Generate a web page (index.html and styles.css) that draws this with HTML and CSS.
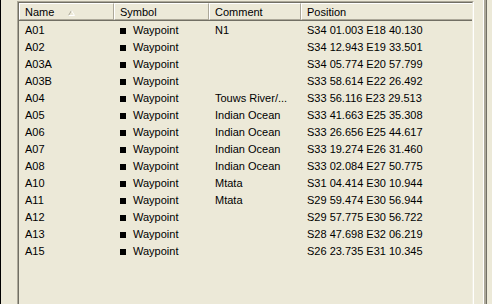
FILE: index.html
```html
<!DOCTYPE html>
<html>
	<head>
		<meta charset="utf-8" />
		<title>Waypoints</title>
		<link rel="stylesheet" href="styles.css">
	</head>
	<body>
		<div class="frame">
			<div class="list">
				<div class="list-inner">
					<div class="head">
						<div class="col">Name <svg class="sort" width="7" height="6" viewBox="0 0 7 6"><polyline points="0.5,5.5 3.5,0.5" fill="none" stroke="#aca899" stroke-width="1"/><polyline points="3.5,0.5 6.5,5.5 0.5,5.5" fill="none" stroke="#ffffff" stroke-width="1"/></svg></div>
						<div class="col">Symbol</div>
						<div class="col">Comment</div>
						<div class="col last">Position</div>
					</div>
					<div class="rows">
						<div class="row"><span>A01</span><span class="sym">Waypoint</span><span>N1</span><span>S34 01.003 E18 40.130</span></div>
						<div class="row"><span>A02</span><span class="sym">Waypoint</span><span></span><span>S34 12.943 E19 33.501</span></div>
						<div class="row"><span>A03A</span><span class="sym">Waypoint</span><span></span><span>S34 05.774 E20 57.799</span></div>
						<div class="row"><span>A03B</span><span class="sym">Waypoint</span><span></span><span>S33 58.614 E22 26.492</span></div>
						<div class="row"><span>A04</span><span class="sym">Waypoint</span><span>Touws River/...</span><span>S33 56.116 E23 29.513</span></div>
						<div class="row"><span>A05</span><span class="sym">Waypoint</span><span>Indian Ocean</span><span>S33 41.663 E25 35.308</span></div>
						<div class="row"><span>A06</span><span class="sym">Waypoint</span><span>Indian Ocean</span><span>S33 26.656 E25 44.617</span></div>
						<div class="row"><span>A07</span><span class="sym">Waypoint</span><span>Indian Ocean</span><span>S33 19.274 E26 31.460</span></div>
						<div class="row"><span>A08</span><span class="sym">Waypoint</span><span>Indian Ocean</span><span>S33 02.084 E27 50.775</span></div>
						<div class="row"><span>A10</span><span class="sym">Waypoint</span><span>Mtata</span><span>S31 04.414 E30 10.944</span></div>
						<div class="row"><span>A11</span><span class="sym">Waypoint</span><span>Mtata</span><span>S29 59.474 E30 56.944</span></div>
						<div class="row"><span>A12</span><span class="sym">Waypoint</span><span></span><span>S29 57.775 E30 56.722</span></div>
						<div class="row"><span>A13</span><span class="sym">Waypoint</span><span></span><span>S28 47.698 E32 06.219</span></div>
						<div class="row"><span>A15</span><span class="sym">Waypoint</span><span></span><span>S26 23.735 E31 10.345</span></div>
					</div>
				</div>
			</div>
			<div class="side"></div>
		</div>
	</body>
</html>
```

FILE: styles.css
```css
html,body{
	margin: 0;
	padding: 0;
}

body{
	background: #ece9d8;
	font-family: "Liberation Sans", Arial, sans-serif;
	font-size: 11px;
	color: #000000;
	width: 492px;
	height: 304px;
	overflow: hidden;
}

.frame{
	display: flex;
	height: 304px;
	border-left: 1px solid #000000;
	padding-left: 16px;
	box-sizing: border-box;
}

/* sunken border of the list view, two lines on each side */
.list{
	width: 457px;
	margin-top: 1px;
	height: 303px;
	border-top: 1px solid #aca899;
	border-left: 1px solid #aca899;
	border-right: 1px solid #ffffff;
	box-sizing: border-box;
}

.list-inner{
	height: 100%;
	border-top: 1px solid #716f64;
	border-left: 1px solid #716f64;
	border-right: 1px solid #f1efe2;
	box-sizing: border-box;
}

.head{
	display: grid;
	grid-template-columns: 95px 95px 92px 1fr;
	height: 17px;
	border-bottom: 1px solid #716f64;
}

.head .col{
	display: flex;
	align-items: center;
	padding-left: 5px;
	border-top: 1px solid #ffffff;
	border-left: 1px solid #ffffff;
	border-right: 1px solid #aca899;
	border-bottom: 1px solid #aca899;
	white-space: nowrap;
}

.head .col.last{
	border-right: none;
}

.sort{
	margin-left: 14px;
	margin-top: 2px;
}

.rows{
	padding-top: 1px;
}

.row{
	display: grid;
	grid-template-columns: 95px 95px 92px 1fr;
	height: 17px;
	line-height: 17px;
}

.row span{
	padding-left: 6px;
	white-space: nowrap;
	overflow: hidden;
}

.row .sym{
	display: flex;
	align-items: center;
}

.row .sym::before{
	content: "";
	width: 6px;
	height: 6px;
	background: #000000;
	margin-right: 7px;
	margin-top: 1px;
}

/* edge of the neighbouring control */
.side{
	margin-left: auto;
	width: 8px;
	border-left: 1px solid #ffffff;
	box-shadow: inset 2px 0 0 #aca899, inset 3px 0 0 #716f64;
}
```
